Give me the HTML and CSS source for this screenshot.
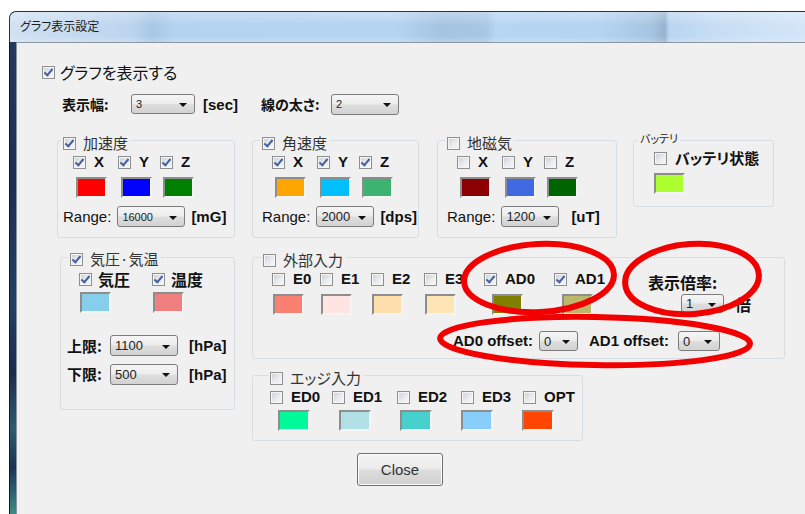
FILE: index.html
```html
<!DOCTYPE html>
<html lang="ja">
<head>
<meta charset="utf-8">
<title>グラフ表示設定</title>
<link rel="stylesheet" href="styles.css">
</head>
<body>
<div class="window">
  <div class="titlebar"><span class="title">グラフ表示設定</span></div>
  <div class="frame">
    <div class="side"></div>
    <div class="client">
      <div class="main-check"><span class="cb on"></span><span>グラフを表示する</span></div>

      <div class="top-row">
        <span class="lbl-b">表示幅:</span>
        <span class="combo small w64">3</span>
        <span class="unit u-sec">[sec]</span>
        <span class="lbl-b l-width">線の太さ:</span>
        <span class="combo small w68 c-width">2</span>
      </div>

      <div class="groups-row">
        <section class="group g-accel">
          <div class="gtitle"><span class="cb on"></span><span>加速度</span></div>
          <div class="xyz">
            <div class="ch"><div class="ck"><span class="cb on"></span><span class="t">X</span></div><span class="sw red"></span></div>
            <div class="ch"><div class="ck"><span class="cb on"></span><span class="t">Y</span></div><span class="sw blue"></span></div>
            <div class="ch"><div class="ck"><span class="cb on"></span><span class="t">Z</span></div><span class="sw green"></span></div>
          </div>
          <div class="range">
            <span class="rl">Range:</span>
            <span class="combo small w68">16000</span>
            <span class="unit">[mG]</span>
          </div>
        </section>

        <section class="group g-gyro">
          <div class="gtitle"><span class="cb on"></span><span>角速度</span></div>
          <div class="xyz">
            <div class="ch"><div class="ck"><span class="cb on"></span><span class="t">X</span></div><span class="sw orange"></span></div>
            <div class="ch"><div class="ck"><span class="cb on"></span><span class="t">Y</span></div><span class="sw deepskyblue"></span></div>
            <div class="ch"><div class="ck"><span class="cb on"></span><span class="t">Z</span></div><span class="sw seagreen"></span></div>
          </div>
          <div class="range">
            <span class="rl">Range:</span>
            <span class="combo w58">2000</span>
            <span class="unit">[dps]</span>
          </div>
        </section>

        <section class="group g-mag">
          <div class="gtitle"><span class="cb"></span><span>地磁気</span></div>
          <div class="xyz">
            <div class="ch"><div class="ck"><span class="cb"></span><span class="t">X</span></div><span class="sw darkred"></span></div>
            <div class="ch"><div class="ck"><span class="cb"></span><span class="t">Y</span></div><span class="sw royalblue"></span></div>
            <div class="ch"><div class="ck"><span class="cb"></span><span class="t">Z</span></div><span class="sw darkgreen"></span></div>
          </div>
          <div class="range">
            <span class="rl">Range:</span>
            <span class="combo w58">1200</span>
            <span class="unit u-wide">[uT]</span>
          </div>
        </section>

        <section class="group g-batt">
          <div class="gtitle small-title"><span>バッテリ</span></div>
          <div class="ck batt-check"><span class="cb"></span><span class="jb batt-label">バッテリ状態</span></div>
          <span class="sw greenyellow"></span>
        </section>
      </div>

      <div class="groups-row2">
        <section class="group g-press">
          <div class="gtitle"><span class="cb on"></span><span>気圧·気温</span></div>
          <div class="pt">
            <div class="ch"><div class="ck"><span class="cb on"></span><span class="jb">気圧</span></div><span class="sw skyblue"></span></div>
            <div class="ch"><div class="ck"><span class="cb on"></span><span class="jb">温度</span></div><span class="sw lightcoral"></span></div>
          </div>
          <div class="limit first">
            <span class="lim-label">上限:</span>
            <span class="combo w68">1100</span>
            <span class="unit">[hPa]</span>
          </div>
          <div class="limit">
            <span class="lim-label">下限:</span>
            <span class="combo w68">500</span>
            <span class="unit">[hPa]</span>
          </div>
        </section>

        <div class="right-col">
          <section class="group g-ext">
            <div class="gtitle"><span class="cb"></span><span>外部入力</span></div>
            <div class="ext-body">
              <div class="ext-grid">
                <div class="ch"><div class="ck"><span class="cb"></span><span class="t">E0</span></div><span class="sw salmon"></span></div>
                <div class="ch"><div class="ck"><span class="cb"></span><span class="t">E1</span></div><span class="sw mistyrose"></span></div>
                <div class="ch"><div class="ck"><span class="cb"></span><span class="t">E2</span></div><span class="sw navajowhite"></span></div>
                <div class="ch"><div class="ck"><span class="cb"></span><span class="t">E3</span></div><span class="sw moccasin"></span></div>
                <div class="ch"><div class="ck"><span class="cb on"></span><span class="t">AD0</span></div><span class="sw ad olive"></span></div>
                <div class="ch"><div class="ck"><span class="cb on"></span><span class="t">AD1</span></div><span class="sw ad darkkhaki"></span></div>
              </div>
              <div class="rate">
                <span class="jb">表示倍率:</span>
                <div class="rate-row"><span class="combo w43">1</span><span class="jb times">倍</span></div>
              </div>
            </div>
            <div class="offsets">
              <span class="t">AD0 offset:</span>
              <span class="combo w39">0</span>
              <span class="t off2">AD1 offset:</span>
              <span class="combo w42">0</span>
            </div>
          </section>

          <section class="group g-edge">
            <div class="gtitle"><span class="cb"></span><span>エッジ入力</span></div>
            <div class="edge-checks">
              <div class="ck"><span class="cb"></span><span class="t">ED0</span></div>
              <div class="ck"><span class="cb"></span><span class="t">ED1</span></div>
              <div class="ck"><span class="cb"></span><span class="t">ED2</span></div>
              <div class="ck"><span class="cb"></span><span class="t">ED3</span></div>
              <div class="ck"><span class="cb"></span><span class="t">OPT</span></div>
            </div>
            <div class="edge-swatches">
              <span class="sw wide springgreen"></span>
              <span class="sw wide powderblue"></span>
              <span class="sw wide turquoise"></span>
              <span class="sw wide lightskyblue"></span>
              <span class="sw wide orangered"></span>
            </div>
          </section>
        </div>
      </div>

      <button class="close-btn" type="button">Close</button>
    </div>
  </div>
</div>

<svg class="marks" width="805" height="514" viewBox="0 0 805 514">
  <ellipse cx="539" cy="278" rx="75" ry="34" transform="rotate(-3 539 278)"/>
  <ellipse cx="692" cy="279" rx="67" ry="35" transform="rotate(-4 692 279)"/>
  <ellipse cx="595" cy="341" rx="155" ry="24" transform="rotate(1 595 341)"/>
</svg>
</body>
</html>
```

FILE: styles.css
```css
* { box-sizing: border-box; }

html, body {
  margin: 0;
  height: 100%;
}

body {
  position: relative;
  background: #ffffff;
  font-family: "Liberation Sans", "Noto Sans CJK JP", sans-serif;
  font-feature-settings: "palt";
  color: #111;
  overflow: hidden;
}

/* ---------- window chrome ---------- */
.window {
  margin: 11px 0 0 9px;
  width: 820px;
  height: 503px;
  display: flex;
  flex-direction: column;
}

.titlebar {
  height: 31px;
  flex: none;
  display: flex;
  align-items: center;
  padding-left: 10px;
  border-top: 1px solid #2c3038;
  border-left: 1px solid #2c3038;
  border-top-left-radius: 7px;
  background:
    linear-gradient(180deg, rgba(255,255,255,0.28) 0, rgba(255,255,255,0) 45%, rgba(255,255,255,0) 80%, rgba(255,255,255,0.2) 100%),
    linear-gradient(90deg, #d0e1f2 0, #bcd5ee 120px, #a8c7e5 143px, #b4d3f1 165px, #b4d4f2 386px, #a6c4e2 431px, #a9c7e4 476px, #b6d6f4 486px, #b4d4f1 591px, #a7c5e2 641px, #97b3cf 655px, #b9d5f0 659px, #c9def4 711px, #d4e6f8 800px);
}

.title {
  font-size: 12px;
  line-height: 14px;
  margin-top: -2px;
  color: #1c1c1c;
  font-family: "Noto Sans CJK JP", sans-serif;
}

.frame {
  flex: 1;
  display: flex;
}

.side {
  width: 7px;
  flex: none;
  border-left: 1px solid #14181e;
  background: linear-gradient(180deg, #23395e 0, #1c2f52 30%, #243f64 55%, #1a2c4e 70%, #2f5b6c 82%, #1c3152 90%, #3f8a86 100%);
}

.client {
  flex: 1;
  background: #f0f0f0;
  border-left: 1px solid #8b96a2;
  border-top: 1px solid #8b96a2;
}

/* ---------- common controls ---------- */
.cb {
  position: relative;
  flex: none;
  width: 13px;
  height: 13px;
  border: 1px solid #8e8f8f;
  background: linear-gradient(135deg, #cbd0d6 0, #e9ebee 55%, #f8f8f8 100%);
  box-shadow: inset 0 0 0 1px #f5f5f5;
}

.cb.on::after {
  content: "";
  position: absolute;
  left: 3px;
  top: 0;
  width: 3px;
  height: 7px;
  border: solid #4560a0;
  border-width: 0 2px 2px 0;
  transform: rotate(40deg);
}

.combo {
  position: relative;
  flex: none;
  display: inline-flex;
  align-items: center;
  height: 21px;
  padding-left: 4px;
  border: 1px solid #7c7c7c;
  border-radius: 3px;
  background: linear-gradient(180deg, #f6f6f6 0, #ececec 48%, #dedede 52%, #d2d2d2 100%);
  font-size: 13px;
  color: #222;
}

.combo.small { font-size: 11px; }

.combo::after {
  content: "";
  position: absolute;
  right: 7px;
  top: 50%;
  margin-top: -1px;
  border-left: 4px solid transparent;
  border-right: 4px solid transparent;
  border-top: 4px solid #111;
}

.w39 { width: 39px; height: 20px; }
.w42 { width: 42px; height: 20px; }
.w43 { width: 43px; height: 19px; }
.w58 { width: 58px; }
.w64 { width: 64px; height: 20px; }
.w68 { width: 68px; }

.sw {
  display: block;
  width: 31px;
  height: 21px;
  margin: 7px 0 0 3px;
  border: 2px solid;
  border-color: #8d8d8d #f4f4f4 #f4f4f4 #8d8d8d;
}

.sw.wide { width: 32px; margin: 0; }
.sw.ad { margin-left: 8px; }

.t {
  font-size: 15px;
  font-weight: bold;
  line-height: 16px;
  color: #111;
}

.jb {
  font-family: "Noto Sans CJK JP", sans-serif;
  font-size: 16px;
  font-weight: bold;
  line-height: 18px;
  color: #111;
}

.ck .jb { line-height: 16px; }

.unit {
  font-size: 15px;
  font-weight: bold;
  color: #111;
}

/* ---------- header rows ---------- */
.main-check {
  display: flex;
  align-items: center;
  gap: 5px;
  height: 18px;
  margin: 20px 0 0 25px;
  font-family: "Noto Sans CJK JP", sans-serif;
  font-size: 16px;
  line-height: 18px;
  color: #111;
}

.top-row {
  display: flex;
  align-items: center;
  height: 20px;
  margin: 13px 0 0 45px;
}

.lbl-b {
  font-family: "Noto Sans CJK JP", sans-serif;
  font-size: 14px;
  font-weight: bold;
  line-height: 16px;
  width: 69px;
}

.u-sec { margin-left: 8px; }
.l-width { margin-left: 23px; width: 70px; }

/* ---------- group boxes ---------- */
.group {
  border: 1px solid #d6dee5;
  border-radius: 3px;
  padding-left: 9px;
  flex: none;
}

.gtitle {
  display: flex;
  align-items: center;
  gap: 7px;
  width: max-content;
  height: 16px;
  margin: -6px 0 0 -2px;
  padding: 0 3px 0 2px;
  background: #f0f0f0;
  font-family: "Noto Sans CJK JP", sans-serif;
  font-size: 15px;
  line-height: 16px;
  color: #333;
}

.ck {
  display: flex;
  align-items: center;
  gap: 8px;
  height: 16px;
}

.ch {
  display: flex;
  flex-direction: column;
}

.groups-row {
  display: flex;
  align-items: flex-start;
  margin: 26px 0 0 40px;
}

.g-accel { width: 178px; height: 98px; margin-right: 17px; padding-left: 5px; }
.g-gyro  { width: 167px; height: 98px; margin-right: 18px; }
.g-mag   { width: 180px; height: 98px; margin-right: 16px; }
.g-batt  { width: 141px; height: 67px; padding-left: 20px; }

.xyz {
  display: grid;
  grid-template-columns: 45px 42px auto;
  margin: 3px 0 0 10px;
}

.range {
  display: flex;
  align-items: center;
  gap: 6px;
  margin-top: 8px;
}

.rl {
  font-size: 15px;
  color: #111;
}

.u-wide { margin-left: 6px; }

.small-title {
  height: 12px;
  margin: -9px 0 0 -16px;
  padding: 0 2px;
  font-size: 11px;
  line-height: 12px;
  color: #222;
}

.batt-check { margin-top: 6px; }
.batt-label { font-size: 15px; }
.g-batt .sw { margin-left: 0; }

/* second row */
.groups-row2 {
  display: flex;
  align-items: flex-start;
  margin: 19px 0 0 43px;
}

.g-press { width: 175px; height: 153px; }
.g-press .gtitle { margin-top: -7px; }

.pt {
  display: grid;
  grid-template-columns: 73px auto;
  margin: 4px 0 0 9px;
}

.pt .jb { margin-left: -2px; }
.pt .sw { margin-top: 5px; margin-left: 1px; }

.limit {
  display: flex;
  align-items: center;
  height: 22px;
  margin: 7px 0 0 -3px;
}

.limit.first { margin-top: 22px; height: 21px; }

.lim-label {
  width: 43px;
  font-family: "Noto Sans CJK JP", sans-serif;
  font-size: 15px;
  font-weight: bold;
  line-height: 16px;
}

.limit .unit { margin-left: 11px; }

.right-col {
  display: flex;
  flex-direction: column;
  margin-left: 17px;
}

.g-ext { width: 533px; height: 102px; padding-left: 10px; }

.ext-body {
  display: flex;
  align-items: flex-start;
}

.ext-grid {
  display: grid;
  grid-template-columns: 48px 51px 53px 60px 70px 94px;
  margin: 3px 0 0 9px;
}

.ext-grid .sw { margin-left: 1px; }
.ext-grid .sw.ad { margin-left: 8px; }

.rate {
  display: flex;
  flex-direction: column;
  margin-top: 5px;
}

.rate-row {
  display: flex;
  align-items: center;
  margin: 3px 0 0 33px;
}

.times { margin-left: 11px; }

.offsets {
  display: flex;
  align-items: center;
  height: 20px;
  margin: 16px 0 0 190px;
}

.offsets .combo { margin-left: 6px; }
.offsets .off2 { margin-left: 11px; }
.offsets .w42 { margin-left: 9px; }

.g-edge { width: 331px; height: 66px; margin-top: 16px; padding-left: 17px; }

.edge-checks {
  display: grid;
  grid-template-columns: 62px 65px 64px 62px auto;
  margin-top: 3px;
}

.edge-swatches {
  display: flex;
  gap: 29px;
  margin: 5px 0 0 8px;
}

/* colour swatches */
.red { background: #ff0000; }
.blue { background: #0000ff; }
.green { background: #008000; }
.orange { background: #ffa500; }
.deepskyblue { background: #00bfff; }
.seagreen { background: #3cb371; }
.darkred { background: #8b0000; }
.royalblue { background: #4169e1; }
.darkgreen { background: #006400; }
.greenyellow { background: #adff2f; }
.skyblue { background: #87ceeb; }
.lightcoral { background: #f08080; }
.salmon { background: #fa8072; }
.mistyrose { background: #ffe4e1; }
.navajowhite { background: #ffdead; }
.moccasin { background: #ffe4b5; }
.olive { background: #808000; }
.darkkhaki { background: #bdb76b; }
.springgreen { background: #00fa9a; }
.powderblue { background: #b0e0e6; }
.turquoise { background: #48d1cc; }
.lightskyblue { background: #87cefa; }
.orangered { background: #ff4500; }

/* ---------- close button ---------- */
.close-btn {
  display: block;
  width: 86px;
  height: 33px;
  margin: 12px 0 0 340px;
  border: 1px solid #707070;
  border-radius: 3px;
  background: linear-gradient(180deg, #f3f3f3 0, #ebebeb 48%, #dddddd 52%, #cfcfcf 100%);
  box-shadow: inset 0 0 0 1px #fcfcfc;
  font-family: "Liberation Sans", sans-serif;
  font-size: 15px;
  color: #333;
  padding: 0;
}

/* ---------- red annotation marks ---------- */
.marks {
  position: absolute;
  left: 0;
  top: 0;
  pointer-events: none;
}

.marks ellipse {
  fill: none;
  stroke: #f20000;
  stroke-width: 6;
}
```
